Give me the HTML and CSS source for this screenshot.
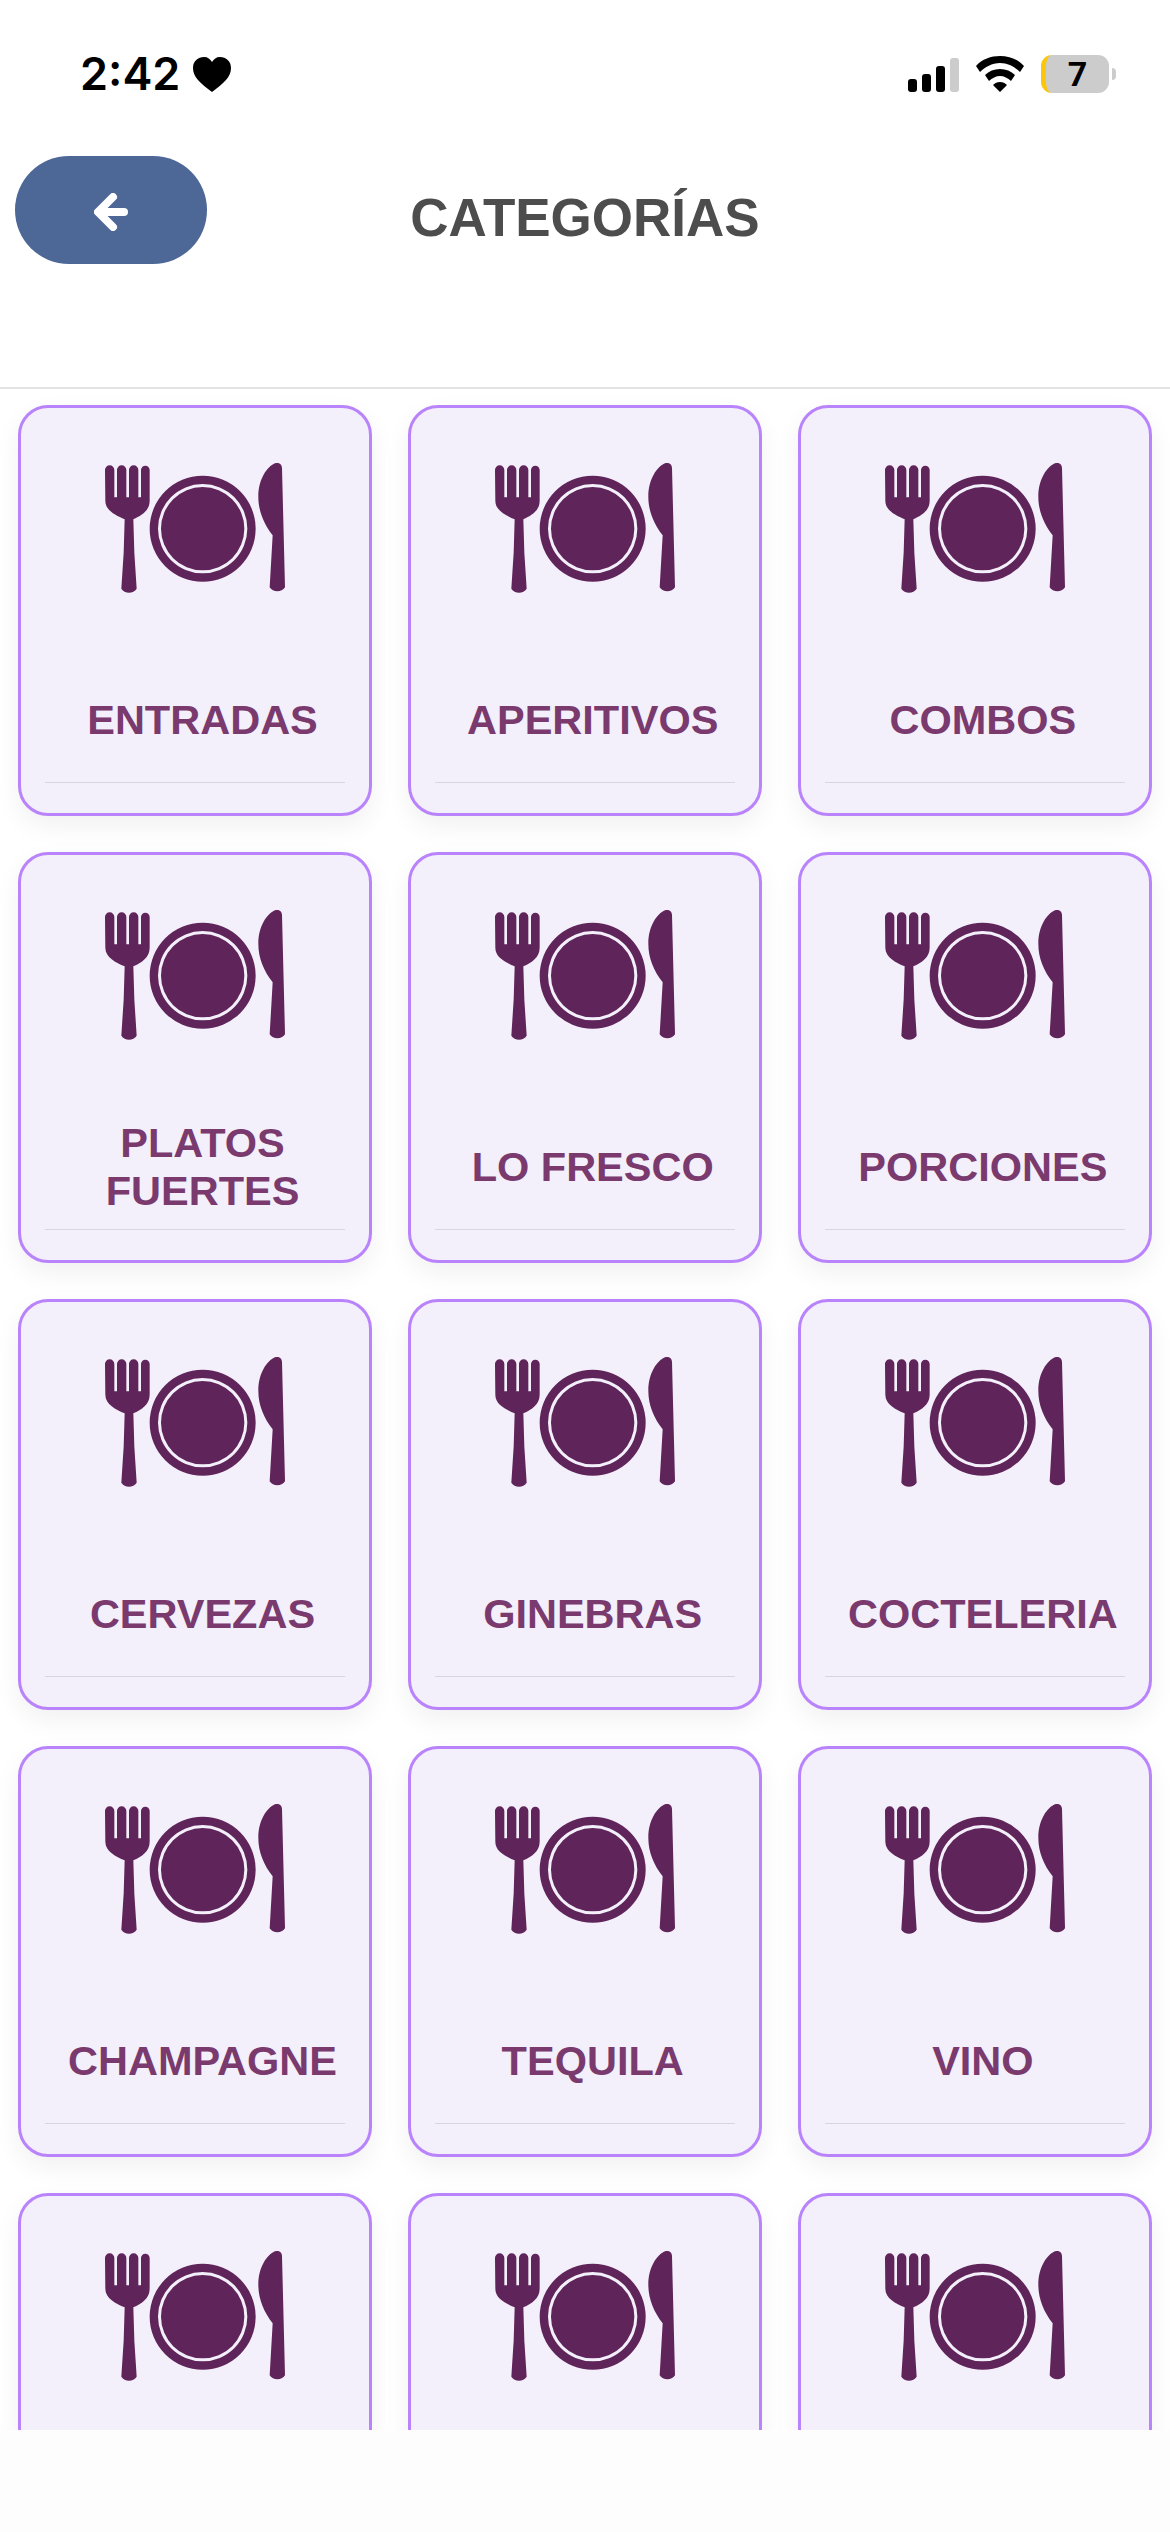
FILE: index.html
```html
<!DOCTYPE html>
<html>
<head>
    <meta name="viewport" content="width=device-width, initial-scale=1.0">
    <title>Categorías</title>
    <link rel="stylesheet" href="styles.css">
</head>
<body>
    <svg class="defs" width="0" height="0">
        <symbol id="plate-icon" viewBox="0 0 690 480">
            <!-- fork -->
            <path d="M75 90a14 14 0 0 1 28 0v82h8V90a14 14 0 0 1 28 0v82h8V90a14 14 0 0 1 28 0v82h8V90a13 13 0 0 1 26 0v92c0 30-24 44-49 56l3 100 7 108c-10 16-36 16-46 0l7-108 3-100c-26-12-58-26-58-56z"/>
            <!-- plate -->
            <path fill-rule="evenodd" d="M368 107a159 159 0 1 0 0 318a159 159 0 1 0 0-318zM368 132a134 134 0 1 1 0 268a134 134 0 1 1 0-268zM368 141a125 125 0 1 0 0 250a125 125 0 1 0 0-250z"/>
            <!-- knife -->
            <path d="M606 84l9 358c-10 16-36 16-46 0l9-156c-26-34-43-72-43-116 0-52 26-90 50-100 10-4 21 2 21 14z"/>
        </symbol>
    </svg>

    <div class="status-bar">
        <div class="status-left">
            <span class="clock">2:42</span>
            <svg class="heart" viewBox="0 0 38 35"><path d="M19 35C7 26 0 20 0 11 0 4 5 0 11 0c4 0 6 2 8 5 2-3 4-5 8-5 6 0 11 4 11 11 0 9-7 15-19 24z"/></svg>
        </div>
        <div class="status-right">
            <div class="signal">
                <span class="bar bar-1"></span>
                <span class="bar bar-2"></span>
                <span class="bar bar-3"></span>
                <span class="bar bar-4"></span>
            </div>
            <svg class="wifi" viewBox="0 0 48 36"><path d="M24 0c9 0 18 3 24 10l-4 6c-5-5-12-9-20-9S9 11 4 16l-4-6C6 3 15 0 24 0zM24 13c6 0 11 2 15 6l-4 6c-3-3-7-5-11-5s-8 2-11 5l-4-6c4-4 9-6 15-6zM24 26c3 0 5 1 7 3l-7 7-7-7c2-2 4-3 7-3z"/></svg>
            <div class="battery">
                <div class="battery-body"><span class="battery-level">7</span></div>
                <span class="battery-tip"></span>
            </div>
        </div>
    </div>

    <header class="top-bar">
        <button class="back-btn">
            <svg class="back-icon" viewBox="0 0 34 38"><path d="M19 4L4 19l15 15M6 19h24" fill="none" stroke="#fff" stroke-width="8" stroke-linecap="round" stroke-linejoin="round"/></svg>
        </button>
        <h1 class="page-title">CATEGORÍAS</h1>
    </header>

    <main class="category-list">
        <div class="category-grid">
            <a class="card"><svg class="card-icon"><use href="#plate-icon"/></svg><div class="card-label">ENTRADAS</div><div class="card-line"></div></a>
            <a class="card"><svg class="card-icon"><use href="#plate-icon"/></svg><div class="card-label">APERITIVOS</div><div class="card-line"></div></a>
            <a class="card"><svg class="card-icon"><use href="#plate-icon"/></svg><div class="card-label">COMBOS</div><div class="card-line"></div></a>
            <a class="card"><svg class="card-icon"><use href="#plate-icon"/></svg><div class="card-label">PLATOS FUERTES</div><div class="card-line"></div></a>
            <a class="card"><svg class="card-icon"><use href="#plate-icon"/></svg><div class="card-label">LO FRESCO</div><div class="card-line"></div></a>
            <a class="card"><svg class="card-icon"><use href="#plate-icon"/></svg><div class="card-label">PORCIONES</div><div class="card-line"></div></a>
            <a class="card"><svg class="card-icon"><use href="#plate-icon"/></svg><div class="card-label">CERVEZAS</div><div class="card-line"></div></a>
            <a class="card"><svg class="card-icon"><use href="#plate-icon"/></svg><div class="card-label">GINEBRAS</div><div class="card-line"></div></a>
            <a class="card"><svg class="card-icon"><use href="#plate-icon"/></svg><div class="card-label">COCTELERIA</div><div class="card-line"></div></a>
            <a class="card"><svg class="card-icon"><use href="#plate-icon"/></svg><div class="card-label">CHAMPAGNE</div><div class="card-line"></div></a>
            <a class="card"><svg class="card-icon"><use href="#plate-icon"/></svg><div class="card-label">TEQUILA</div><div class="card-line"></div></a>
            <a class="card"><svg class="card-icon"><use href="#plate-icon"/></svg><div class="card-label">VINO</div><div class="card-line"></div></a>
            <a class="card"><svg class="card-icon"><use href="#plate-icon"/></svg></a>
            <a class="card"><svg class="card-icon"><use href="#plate-icon"/></svg></a>
            <a class="card"><svg class="card-icon"><use href="#plate-icon"/></svg></a>
        </div>
    </main>

    <div class="bottom-bar"></div>
</body>
</html>
```

FILE: styles.css
```css
html, body {
    margin: 0;
    height: 100%;
}

body {
    width: 1170px;
    height: 2532px;
    display: flex;
    flex-direction: column;
    overflow: hidden;
    background-color: #fff;
    font-family: "Liberation Sans", Arial, sans-serif;
}

.defs {
    position: absolute;
}

/* status bar */
.status-bar {
    height: 148px;
    box-sizing: border-box;
    padding: 55px 54px 0 80px;
    display: flex;
    justify-content: space-between;
    align-items: flex-start;
}

.status-left {
    display: flex;
    align-items: center;
    gap: 13px;
}

.clock {
    font-family: Inter, sans-serif;
    font-weight: 600;
    font-size: 45px;
    line-height: 38px;
    color: #000;
}

.heart {
    width: 38px;
    height: 35px;
}

.status-right {
    display: flex;
    align-items: center;
    gap: 17px;
}

.signal {
    display: flex;
    align-items: flex-end;
    gap: 5px;
    height: 36px;
}

.bar {
    width: 9px;
    background-color: #000;
    border-radius: 3px;
}

.bar-1 { height: 13px; }
.bar-2 { height: 18px; }
.bar-3 { height: 26px; }
.bar-4 { height: 34px; background-color: #ccc; }

.wifi {
    width: 48px;
    height: 36px;
}

.battery {
    display: flex;
    align-items: center;
    gap: 3px;
}

.battery-body {
    width: 68px;
    height: 38px;
    box-sizing: border-box;
    border-left: 5px solid #fcc60a;
    border-radius: 11px;
    background-color: #ccc;
    display: flex;
    justify-content: center;
    align-items: center;
}

.battery-level {
    font-family: Roboto, sans-serif;
    font-weight: 700;
    font-size: 34px;
    color: #000;
}

.battery-tip {
    width: 4px;
    height: 12px;
    background-color: #ccc;
    border-radius: 0 6px 6px 0;
}

/* header */
.top-bar {
    height: 241px;
    box-sizing: border-box;
    padding: 8px 0 0 15px;
    border-bottom: 2px solid #e4e4e4;
    display: grid;
    grid-template-columns: 192px 1fr 207px;
    align-items: start;
}

.back-btn {
    width: 192px;
    height: 108px;
    padding: 3px 0 0;
    border: none;
    border-radius: 54px;
    background-color: #4d6796;
    display: flex;
    justify-content: center;
    align-items: center;
}

.back-icon {
    width: 34px;
    height: 38px;
}

.page-title {
    margin: 32px 0 0;
    font-size: 53px;
    line-height: 60px;
    font-weight: 700;
    text-align: center;
    color: #4d4d4d;
}

/* cards */
.category-list {
    flex: 1;
    min-height: 0;
    overflow: hidden;
    padding: 16px 18px 0;
}

.category-grid {
    display: grid;
    grid-template-columns: repeat(3, 354px);
    column-gap: 36.2px;
    row-gap: 36px;
}

.card {
    height: 411px;
    box-sizing: border-box;
    padding: 32px 24px 0;
    border: 3px solid #b983fb;
    border-radius: 30px;
    background-color: #f3effb;
    box-shadow: 0 10px 26px rgba(0, 0, 0, 0.06);
    display: flex;
    flex-direction: column;
    align-items: center;
}

.card-icon {
    width: 230px;
    height: 160px;
    flex: none;
    fill: #5f2459;
}

.card-label {
    height: 100px;
    margin-top: 70px;
    margin-bottom: 12px;
    padding-left: 15px;
    display: flex;
    align-items: center;
    text-align: center;
    font-size: 41.5px;
    line-height: 48px;
    font-weight: 700;
    color: #7a3a6e;
}

.card-line {
    width: 100%;
    height: 1px;
    flex: none;
    background-color: #d9d5e0;
}

.bottom-bar {
    height: 102px;
    flex: none;
    background-color: #fdfdfd;
}
```
